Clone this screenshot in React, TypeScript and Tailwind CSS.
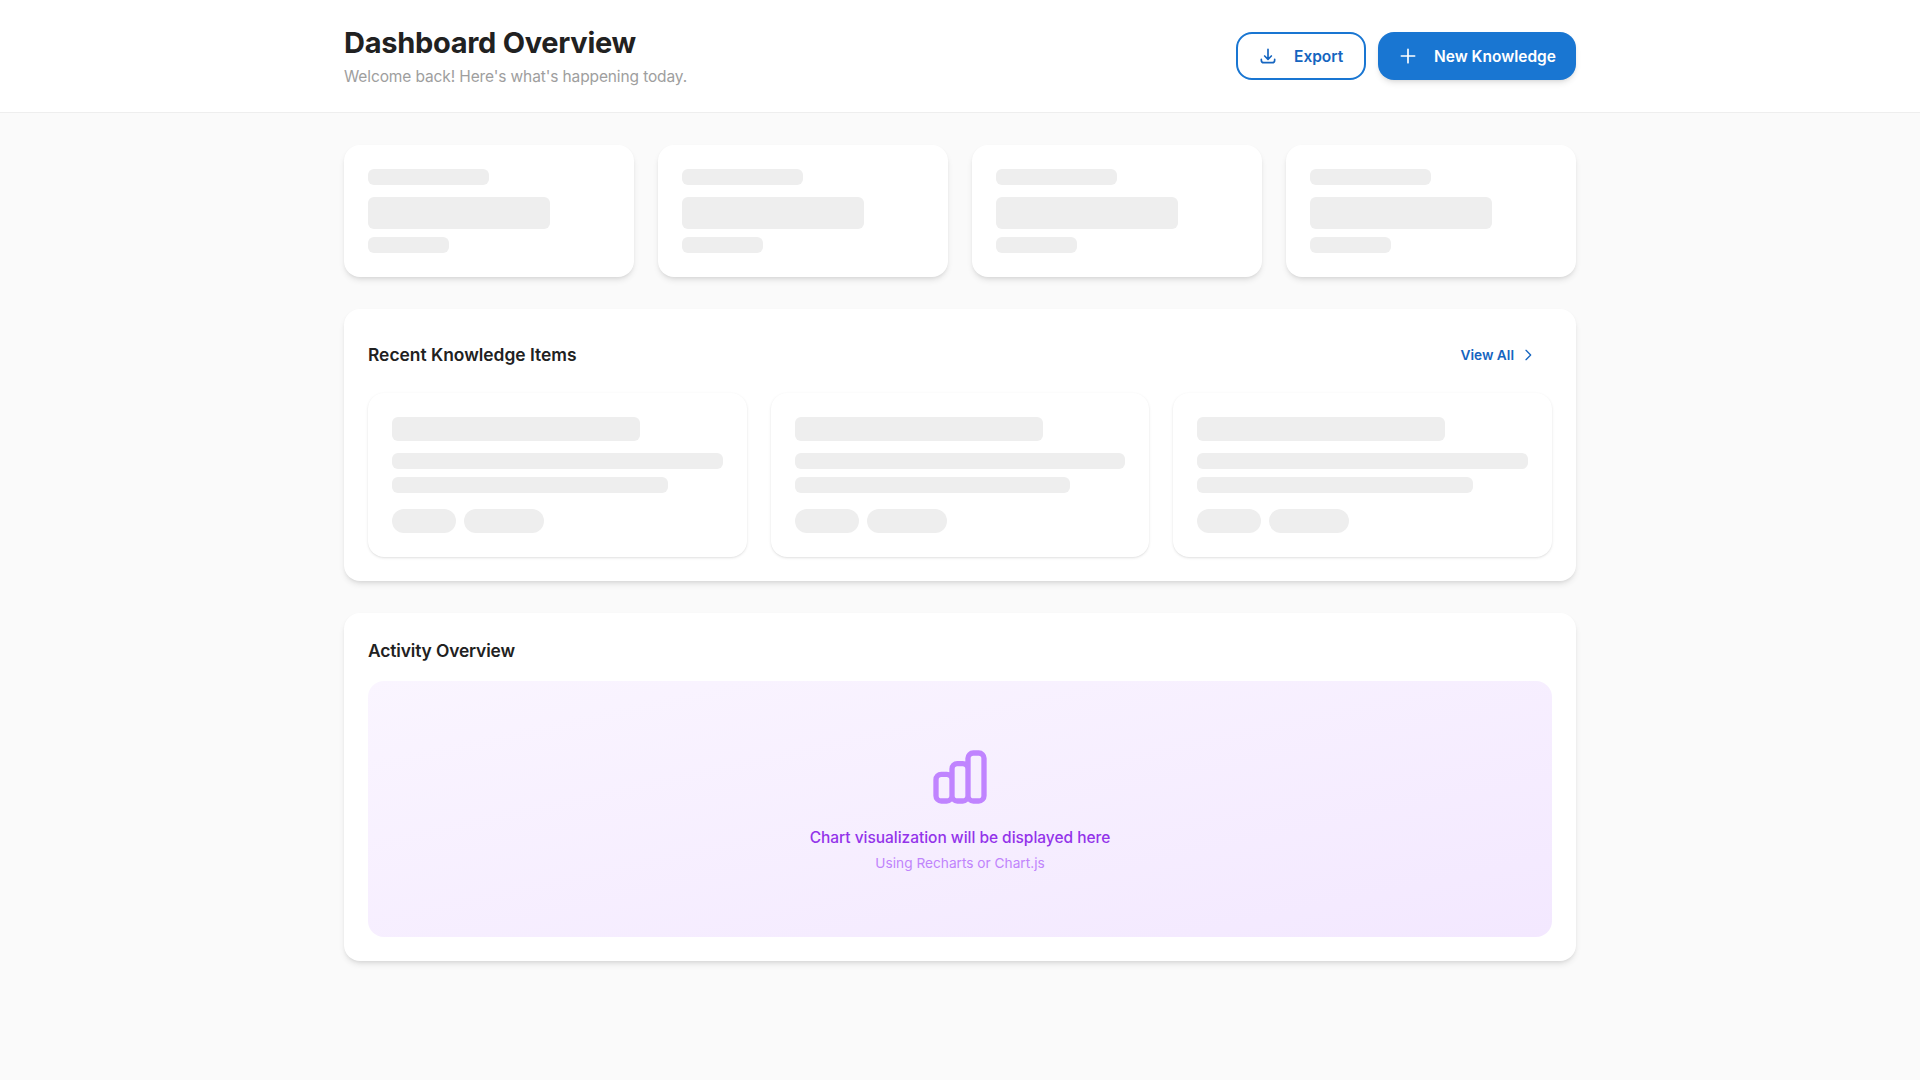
import React from 'react';

type IconProps = { d: string; className?: string };

const Icon = ({ d, className }: IconProps) => (
  <svg className={className} viewBox="0 0 24 24" fill="none" stroke="currentColor" strokeWidth={2} strokeLinecap="round" strokeLinejoin="round">
    <path d={d} />
  </svg>
);

const icons = {
  download: 'M4 16v1a3 3 0 003 3h10a3 3 0 003-3v-1m-4-4l-4 4m0 0l-4-4m4 4V4',
  plus: 'M12 4v16m8-8H4',
  chevron: 'M9 5l7 7-7 7',
  chart:
    'M9 19v-6a2 2 0 00-2-2H5a2 2 0 00-2 2v6a2 2 0 002 2h2a2 2 0 002-2zm0 0V9a2 2 0 012-2h2a2 2 0 012 2v10m-6 0a2 2 0 002 2h2a2 2 0 002-2m0 0V5a2 2 0 012-2h2a2 2 0 012 2v14a2 2 0 01-2 2h-2a2 2 0 01-2-2z',
};

const Bone = ({ className }: { className: string }) => <div className={`bg-[#eeeeee] ${className}`} />;

const StatSkeleton = () => (
  <div className="rounded-2xl bg-white p-6 shadow-md">
    <Bone className="mb-3 h-4 w-1/2 rounded-md" />
    <Bone className="mb-2 h-8 w-3/4 rounded-md" />
    <Bone className="h-4 w-1/3 rounded-md" />
  </div>
);

const ItemSkeleton = () => (
  <div className="rounded-2xl bg-white p-6 shadow-sm">
    <Bone className="mb-3 h-6 w-3/4 rounded-md" />
    <Bone className="mb-2 h-4 w-full rounded-md" />
    <Bone className="mb-4 h-4 w-5/6 rounded-md" />
    <div className="flex gap-2">
      <Bone className="h-6 w-16 rounded-full" />
      <Bone className="h-6 w-20 rounded-full" />
    </div>
  </div>
);

export default function App() {
  return (
    <div className="min-h-screen bg-[#fafafa] font-['Inter',sans-serif] text-[#212121] antialiased">
      <header className="border-b border-[#eeeeee] bg-white">
        <div className="mx-auto flex max-w-7xl items-center justify-between px-6 py-6">
          <div>
            <h1 className="text-[29px] leading-[38px] font-bold tracking-[-0.28px]">Dashboard Overview</h1>
            <p className="mt-0.5 -mb-0.5 text-[15.5px] leading-[26px] tracking-[-0.12px] text-[#9e9e9e]">Welcome back! Here's what's happening today.</p>
          </div>
          <div className="flex gap-3">
            <button className="flex h-12 w-[130px] items-center gap-4 rounded-2xl border-2 border-[#1976d2] px-5 text-[15.5px] leading-6 font-semibold whitespace-nowrap text-[#1565c0]">
              <Icon d={icons.download} className="size-5 shrink-0" />
              <span className="pt-0.5">Export</span>
            </button>
            <button className="flex h-12 w-[198px] items-center gap-4 rounded-2xl bg-[#1976d2] px-5 text-[15.5px] leading-6 font-semibold whitespace-nowrap text-white shadow-md">
              <Icon d={icons.plus} className="size-5 shrink-0" />
              <span className="pt-0.5">New Knowledge</span>
            </button>
          </div>
        </div>
      </header>

      <main className="mx-auto flex max-w-7xl flex-col gap-8 px-6 py-8">
        <section className="grid grid-cols-4 gap-6">
          {[0, 1, 2, 3].map((i) => (
            <StatSkeleton key={i} />
          ))}
        </section>

        <section className="rounded-2xl bg-white p-6 shadow-md">
          <div className="mb-4 flex h-11 items-center justify-between">
            <h2 className="text-[17.4px] leading-7 font-semibold">Recent Knowledge Items</h2>
            <button className="flex h-11 items-center gap-1.5 px-4 text-[13.7px] leading-5 font-semibold text-[#1565c0]">
              View All
              <Icon d={icons.chevron} className="size-4" />
            </button>
          </div>
          <div className="grid grid-cols-3 gap-6">
            {[0, 1, 2].map((i) => (
              <ItemSkeleton key={i} />
            ))}
          </div>
        </section>

        <section className="rounded-2xl bg-white p-6 shadow-md">
          <h2 className="mb-4 text-[17.4px] leading-7 font-semibold tracking-[-0.13px]">Activity Overview</h2>
          <div className="flex h-64 flex-col items-center justify-center rounded-2xl bg-linear-to-br from-[#faf5ff] to-[#f3e8ff]">
            <Icon d={icons.chart} className="mb-4 size-16 text-[#c084ff]" />
            <p className="text-[15.5px] leading-[26px] font-medium tracking-[-0.03px] text-[#9333ea]">Chart visualization will be displayed here</p>
            <p className="mt-0.5 text-[13.7px] leading-5 text-[#c084fc]">Using Recharts or Chart.js</p>
          </div>
        </section>
      </main>
    </div>
  );
}
